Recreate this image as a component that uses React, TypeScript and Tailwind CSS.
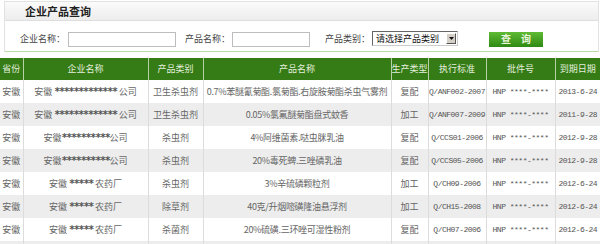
import React from 'react';

type Row = {
  prov: string;
  company: React.ReactNode;
  kind: string;
  product: string;
  mode: string;
  std: string;
  date: string;
};

const stars = (n: number) => (
  <span className="font-['DejaVu_Sans_Mono',monospace] text-[10px] tracking-[-1.2px] text-[#555] font-bold">{'*'.repeat(n)}</span>
);

const rows: Row[] = [
  { prov: '安徽', company: <>安徽 {stars(13)} 公司</>, kind: '卫生杀虫剂', product: '0.7%苯醚氰菊酯.氯菊酯.右旋胺菊酯杀虫气雾剂', mode: '复配', std: 'Q/ANF002-2007', date: '2013-6-24' },
  { prov: '安徽', company: <>安徽 {stars(13)} 公司</>, kind: '卫生杀虫剂', product: '0.05%氯氟醚菊酯盘式蚊香', mode: '加工', std: 'Q/ANF007-2009', date: '2011-9-28' },
  { prov: '安徽', company: <>安徽{stars(10)}公司</>, kind: '杀虫剂', product: '4%阿维菌素.哒虫脒乳油', mode: '复配', std: 'Q/CCS01-2006', date: '2012-9-28' },
  { prov: '安徽', company: <>安徽{stars(10)}公司</>, kind: '杀虫剂', product: '20%毒死蜱.三唑磷乳油', mode: '复配', std: 'Q/CCS05-2006', date: '2012-9-28' },
  { prov: '安徽', company: <>安徽 {stars(5)} 农药厂</>, kind: '杀虫剂', product: '3%辛硫磷颗粒剂', mode: '加工', std: 'Q/CH09-2006', date: '2012-6-24' },
  { prov: '安徽', company: <>安徽 {stars(5)} 农药厂</>, kind: '除草剂', product: '40克/升烟嘧磺隆油悬浮剂', mode: '加工', std: 'Q/CH15-2008', date: '2012-6-24' },
  { prov: '安徽', company: <>安徽 {stars(5)} 农药厂</>, kind: '杀菌剂', product: '20%硫磺.三环唑可湿性粉剂', mode: '复配', std: 'Q/CH07-2006', date: '2012-6-24' },
];

const headers = ['省份', '企业名称', '产品类别', '产品名称', '生产类型', '执行标准', '批件号', '到期日期'];
const widths = ['w-[23px]', 'w-[125px]', 'w-[55px]', 'w-[188px]', 'w-[37px]', 'w-[58px]', 'w-[69px]', 'w-[45px]'];

const mono = "font-['Liberation_Mono',monospace] text-[8px] tracking-[-0.5px] text-[#555]";
const cell = 'p-0 text-center whitespace-nowrap overflow-hidden border-l border-[#dcdcdc]';

const App = () => {
  return (
    <div className="w-[602px] h-[244px] bg-white overflow-hidden font-['Noto_Sans_CJK_SC','Noto_Sans',sans-serif]">
      <div className="mx-[4px] mt-[1px] w-[595px] border-x border-t border-[#e2e2e2]">
        <div className="h-[19px] flex items-center pl-[20px] bg-gradient-to-b from-[#fbfbfb] to-[#ededed] border-b border-[#dedede]">
          <span className="text-[11px] font-bold text-[#222] leading-none">企业产品查询</span>
        </div>
        <div className="h-[31px] flex items-center pl-[15px] pt-[6px] text-[9px] text-[#444] border-b border-[#b9dca5]">
          <span>企业名称：</span>
          <div className="ml-[3px] w-[108px] h-[15px] border border-[#bdbdbd] bg-white" />
          <span className="ml-[9px]">产品名称：</span>
          <div className="ml-[2px] w-[78px] h-[15px] border border-[#bdbdbd] bg-white" />
          <span className="ml-[15px]">产品类别：</span>
          <div className="ml-[2px] -mt-[2px] w-[86px] h-[15px] border border-t-[#666] border-l-[#666] border-r-[#ccc] border-b-[#ccc] bg-white flex items-center">
            <span className="flex-1 pl-[3px] text-[9px] text-[#111] leading-none whitespace-nowrap">请选择产品类别</span>
            <div className="w-[10px] h-[11px] mr-[1px] shrink-0 bg-[#d4d0c8] border border-t-white border-l-white border-r-[#555] border-b-[#555] flex items-center justify-center">
              <svg width="5" height="3" viewBox="0 0 5 3"><path d="M0 0h5L2.5 3z" fill="#111" /></svg>
            </div>
          </div>
          <button className="ml-[31px] w-[54px] h-[15px] bg-gradient-to-b from-[#5fba34] to-[#2e8a12] text-[10px] font-bold text-[#eaf6dc] leading-none">
            查　询
          </button>
        </div>
      </div>
      <table className="mt-[6px] w-[600px] table-fixed border-collapse text-[9px] text-[#666]">
        <colgroup>
          {widths.map((w, i) => <col key={i} className={w} />)}
        </colgroup>
        <thead>
          <tr className="h-[22px] bg-[#357c17]">
            {headers.map((h, i) => (
              <th key={i} className="font-normal text-[#e4efdc] border-l border-[#b7d2a9] first:border-l-0 p-0 whitespace-nowrap overflow-hidden">{h}</th>
            ))}
          </tr>
        </thead>
        <tbody>
          {rows.map((r, i) => (
            <tr key={i} className={`h-[23px] ${i % 2 === 0 ? 'bg-white' : 'bg-[#ededed]'}`}>
              <td className="p-0 text-center">{r.prov}</td>
              <td className={cell}>{r.company}</td>
              <td className={cell}>{r.kind}</td>
              <td className={`${cell} tracking-[-0.3px]`}>{r.product}</td>
              <td className={cell}>{r.mode}</td>
              <td className={`${cell} ${mono}`}>{r.std}</td>
              <td className={`${cell} ${mono}`}>HNP ****-****</td>
              <td className={`${cell} ${mono}`}>{r.date}</td>
            </tr>
          ))}
          <tr className="h-[23px] bg-[#ededed]">
            {widths.map((_, i) => <td key={i} className={i === 0 ? 'p-0' : cell} />)}
          </tr>
        </tbody>
      </table>
    </div>
  );
};

export default App;
